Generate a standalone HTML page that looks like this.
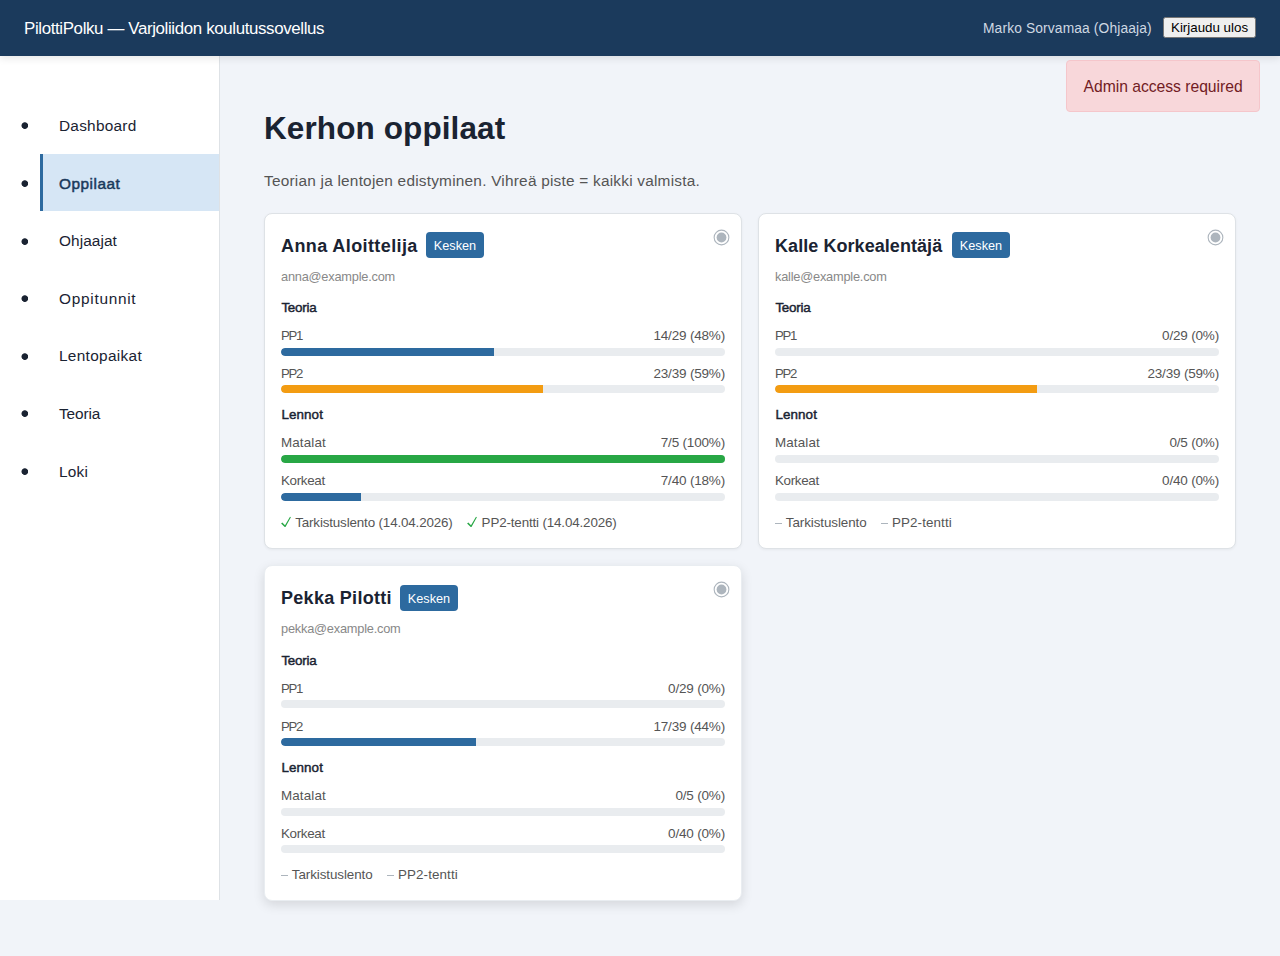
<!DOCTYPE html>
<html lang="fi">
<head>
<meta charset="utf-8">
<title>PilottiPolku</title>
<style>
*{box-sizing:border-box}
html,body{margin:0;padding:0}
body{width:1280px;height:956px;overflow:hidden;background:#f1f4f9;font-family:"Liberation Sans",sans-serif;color:#1a2332;position:relative}
.abs{position:absolute;white-space:nowrap}
header{position:absolute;left:0;top:0;width:1280px;height:56px;background:#1b3a5c;box-shadow:0 2px 8px rgba(0,0,0,.11);z-index:5}
#title{left:24px;top:14.9px;line-height:28px;font-size:16.9px;letter-spacing:-.37px;color:#fff}
#user{left:983px;top:15px;line-height:28px;font-size:13.8px;letter-spacing:.13px;color:#cfd8e2}
#logout{position:absolute;left:1163px;top:17px;font-family:"Liberation Sans",sans-serif;font-size:13.3333px;margin:0}
#flash{position:absolute;left:1066px;top:60px;width:194px;height:52px;background:#f8d7da;border:1px solid #f5c6cb;border-radius:4px;color:#721c24;z-index:6}
#flash span{left:16.5px;top:13.3px;line-height:26px;font-size:15.7px;letter-spacing:-.02px}
#side{position:absolute;left:0;top:56px;width:220px;height:844px;background:#fff;border-right:1px solid #dee2e6}
.nav{position:absolute;left:40px;width:179px;height:57.6px;border-left:3px solid transparent}
.nav span{left:16px;top:17.1px;line-height:25.6px;font-size:15.4px;color:#1a2332}
.nav.act{background:#d6e6f5;border-left-color:#2d6a9f}
.nav.act span{font-weight:normal;-webkit-text-stroke:.5px #1b3a5c;color:#1b3a5c;letter-spacing:.5px}
.nav i{position:absolute;left:-23px;top:25.4px;width:9px;height:9px;background:radial-gradient(circle at 4.8px 4.6px,#1a2332 2.9px,rgba(26,35,50,0) 3.7px)}
#h1{left:264px;top:105.9px;line-height:44px;font-size:31.5px;letter-spacing:.1px;font-weight:bold}
#sub{left:264px;top:168px;line-height:26px;font-size:15.4px;letter-spacing:.22px;color:#555}
.card{position:absolute;width:478px;height:336px;background:#fff;border:1px solid #dee2e6;border-radius:8px;box-shadow:0 1px 3px rgba(0,0,0,.05)}
.card.hov{box-shadow:0 4px 12px rgba(0,0,0,.12);border-color:#e9edf1}
.name{left:16px;top:17.9px;line-height:28px;font-size:18px;font-weight:bold}
.badge{position:absolute;top:18px;height:26px;width:58px;background:#2d6a9f;border-radius:4px;color:#fff;font-size:12.7px;line-height:28px;text-align:center}
.email{left:16px;top:51.7px;line-height:22px;font-size:12.8px;letter-spacing:-.22px;color:#888}
.sec{left:16.4px;line-height:22px;font-size:13.4px;letter-spacing:-.25px;font-weight:normal;-webkit-text-stroke:.45px #1a2332}
.lab{left:16px;line-height:22px;font-size:13.4px;color:#555}
.val{right:16px;line-height:22px;font-size:13.5px;letter-spacing:-.18px;color:#555}
.bar{position:absolute;left:16px;width:444px;height:8px;border-radius:4px;background:#e9ecef;overflow:hidden}
.bar b{display:block;height:8px;border-radius:4px 0 0 4px}
.blue{background:#2d6a9f}.org{background:#f39c12}.grn{background:#28a745}
.chk{top:297.7px;line-height:22px;font-size:13.4px;color:#555}
.ck{position:absolute;top:302px;width:11px;height:12px}.da{position:absolute;top:309px;width:6.8px;height:1px;background:#adb5bd}
.dot{position:absolute;right:10.7px;width:17px;height:17px}
</style>
</head>
<body>
<header>
  <span class="abs" id="title">PilottiPolku — Varjoliidon koulutussovellus</span>
  <span class="abs" id="user">Marko Sorvamaa (Ohjaaja)</span>
  <button id="logout">Kirjaudu ulos</button>
</header>
<div id="flash"><span class="abs">Admin access required</span></div>
<div id="side">
  <div class="nav" style="top:40px"><i></i><span class="abs" style="letter-spacing:.24px">Dashboard</span></div>
  <div class="nav act" style="top:97.6px"><i></i><span class="abs">Oppilaat</span></div>
  <div class="nav" style="top:155.2px"><i></i><span class="abs" style="letter-spacing:.07px">Ohjaajat</span></div>
  <div class="nav" style="top:212.8px"><i></i><span class="abs" style="letter-spacing:.72px">Oppitunnit</span></div>
  <div class="nav" style="top:270.4px"><i></i><span class="abs" style="letter-spacing:.31px">Lentopaikat</span></div>
  <div class="nav" style="top:328px"><i></i><span class="abs" style="letter-spacing:-.14px">Teoria</span></div>
  <div class="nav" style="top:385.6px"><i></i><span class="abs" style="letter-spacing:.2px">Loki</span></div>
</div>
<span class="abs" id="h1">Kerhon oppilaat</span>
<span class="abs" id="sub">Teorian ja lentojen edistyminen. Vihreä piste = kaikki valmista.</span>
<!--CARDS-->
<div class="card" style="left:264px;top:213px">
 <span class="abs name" style="letter-spacing:.4px">Anna Aloittelija</span><span class="badge" style="left:161px;top:18px">Kesken</span><svg class="dot" style="top:15.4px" viewBox="0 0 17 17"><circle cx="8.5" cy="8.5" r="7.35" fill="none" stroke="#adb5bd" stroke-width="1.1"/><circle cx="8.5" cy="8.5" r="4.9" fill="#adb5bd"/></svg>
 <span class="abs email">anna@example.com</span>
 <span class="abs sec" style="top:82.6px">Teoria</span>
 <span class="abs lab" style="top:111.0px;letter-spacing:-1.3px;font-size:13.2px">PP1</span><span class="abs val" style="top:111.0px">14/29 (48%)</span>
 <div class="bar" style="top:134px"><b class="blue" style="width:213px"></b></div>
 <span class="abs lab" style="top:148.79999999999998px;letter-spacing:-1.3px;font-size:13.2px">PP2</span><span class="abs val" style="top:148.79999999999998px">23/39 (59%)</span>
 <div class="bar" style="top:171.3px"><b class="org" style="width:262px"></b></div>
 <span class="abs sec" style="top:190.0px;letter-spacing:.08px;left:16.5px">Lennot</span>
 <span class="abs lab" style="top:217.79999999999998px;letter-spacing:.13px">Matalat</span><span class="abs val" style="top:217.79999999999998px">7/5 (100%)</span>
 <div class="bar" style="top:241px"><b class="grn" style="width:444px"></b></div>
 <span class="abs lab" style="top:255.6px;letter-spacing:-.33px">Korkeat</span><span class="abs val" style="top:255.6px">7/40 (18%)</span>
 <div class="bar" style="top:279px"><b class="blue" style="width:80px"></b></div>
 <svg class="ck" style="left:16px" viewBox="0 0 11 12"><path d="M0.1 7.5 L1.3 6.6 L4.0 9.2 L9.0 0.7 L9.9 1.2 L4.5 10.9 L3.7 10.9 Z" fill="#28a745"/></svg><span class="abs chk" style="left:30.2px;letter-spacing:-0.15px">Tarkistuslento (14.04.2026)</span>
 <svg class="ck" style="left:202px" viewBox="0 0 11 12"><path d="M0.1 7.5 L1.3 6.6 L4.0 9.2 L9.0 0.7 L9.9 1.2 L4.5 10.9 L3.7 10.9 Z" fill="#28a745"/></svg><span class="abs chk" style="left:216.6px;letter-spacing:-0.15px">PP2-tentti (14.04.2026)</span>
</div>
<div class="card" style="left:758px;top:213px">
 <span class="abs name" style="letter-spacing:.06px">Kalle Korkealentäjä</span><span class="badge" style="left:193px;top:18px">Kesken</span><svg class="dot" style="top:15.4px" viewBox="0 0 17 17"><circle cx="8.5" cy="8.5" r="7.35" fill="none" stroke="#adb5bd" stroke-width="1.1"/><circle cx="8.5" cy="8.5" r="4.9" fill="#adb5bd"/></svg>
 <span class="abs email">kalle@example.com</span>
 <span class="abs sec" style="top:82.6px">Teoria</span>
 <span class="abs lab" style="top:111.0px;letter-spacing:-1.3px;font-size:13.2px">PP1</span><span class="abs val" style="top:111.0px">0/29 (0%)</span>
 <div class="bar" style="top:134px"></div>
 <span class="abs lab" style="top:148.79999999999998px;letter-spacing:-1.3px;font-size:13.2px">PP2</span><span class="abs val" style="top:148.79999999999998px">23/39 (59%)</span>
 <div class="bar" style="top:171.3px"><b class="org" style="width:262px"></b></div>
 <span class="abs sec" style="top:190.0px;letter-spacing:.08px;left:16.5px">Lennot</span>
 <span class="abs lab" style="top:217.79999999999998px;letter-spacing:.13px">Matalat</span><span class="abs val" style="top:217.79999999999998px">0/5 (0%)</span>
 <div class="bar" style="top:241px"></div>
 <span class="abs lab" style="top:255.6px;letter-spacing:-.33px">Korkeat</span><span class="abs val" style="top:255.6px">0/40 (0%)</span>
 <div class="bar" style="top:279px"></div>
 <i class="da" style="left:16.2px"></i><span class="abs chk" style="left:26.8px;letter-spacing:-0.08px">Tarkistuslento</span>
 <i class="da" style="left:122.2px"></i><span class="abs chk" style="left:133px;letter-spacing:0.1px">PP2-tentti</span>
</div>
<div class="card hov" style="left:264px;top:565px">
 <span class="abs name" style="letter-spacing:.29px">Pekka Pilotti</span><span class="badge" style="left:135px;top:19px">Kesken</span><svg class="dot" style="top:15.2px" viewBox="0 0 17 17"><circle cx="8.5" cy="8.5" r="7.35" fill="none" stroke="#adb5bd" stroke-width="1.1"/><circle cx="8.5" cy="8.5" r="4.9" fill="#adb5bd"/></svg>
 <span class="abs email">pekka@example.com</span>
 <span class="abs sec" style="top:83.5px">Teoria</span>
 <span class="abs lab" style="top:111.9px;letter-spacing:-1.3px;font-size:13.2px">PP1</span><span class="abs val" style="top:111.9px">0/29 (0%)</span>
 <div class="bar" style="top:134px"></div>
 <span class="abs lab" style="top:149.7px;letter-spacing:-1.3px;font-size:13.2px">PP2</span><span class="abs val" style="top:149.7px">17/39 (44%)</span>
 <div class="bar" style="top:172px"><b class="blue" style="width:195px"></b></div>
 <span class="abs sec" style="top:190.9px;letter-spacing:.08px;left:16.5px">Lennot</span>
 <span class="abs lab" style="top:218.7px;letter-spacing:.13px">Matalat</span><span class="abs val" style="top:218.7px">0/5 (0%)</span>
 <div class="bar" style="top:242px"></div>
 <span class="abs lab" style="top:256.5px;letter-spacing:-.33px">Korkeat</span><span class="abs val" style="top:256.5px">0/40 (0%)</span>
 <div class="bar" style="top:279px"></div>
 <i class="da" style="left:16.2px"></i><span class="abs chk" style="left:26.8px;letter-spacing:-0.08px">Tarkistuslento</span>
 <i class="da" style="left:122.2px"></i><span class="abs chk" style="left:133px;letter-spacing:0.1px">PP2-tentti</span>
</div>
<!--/CARDS-->
</body>
</html>
